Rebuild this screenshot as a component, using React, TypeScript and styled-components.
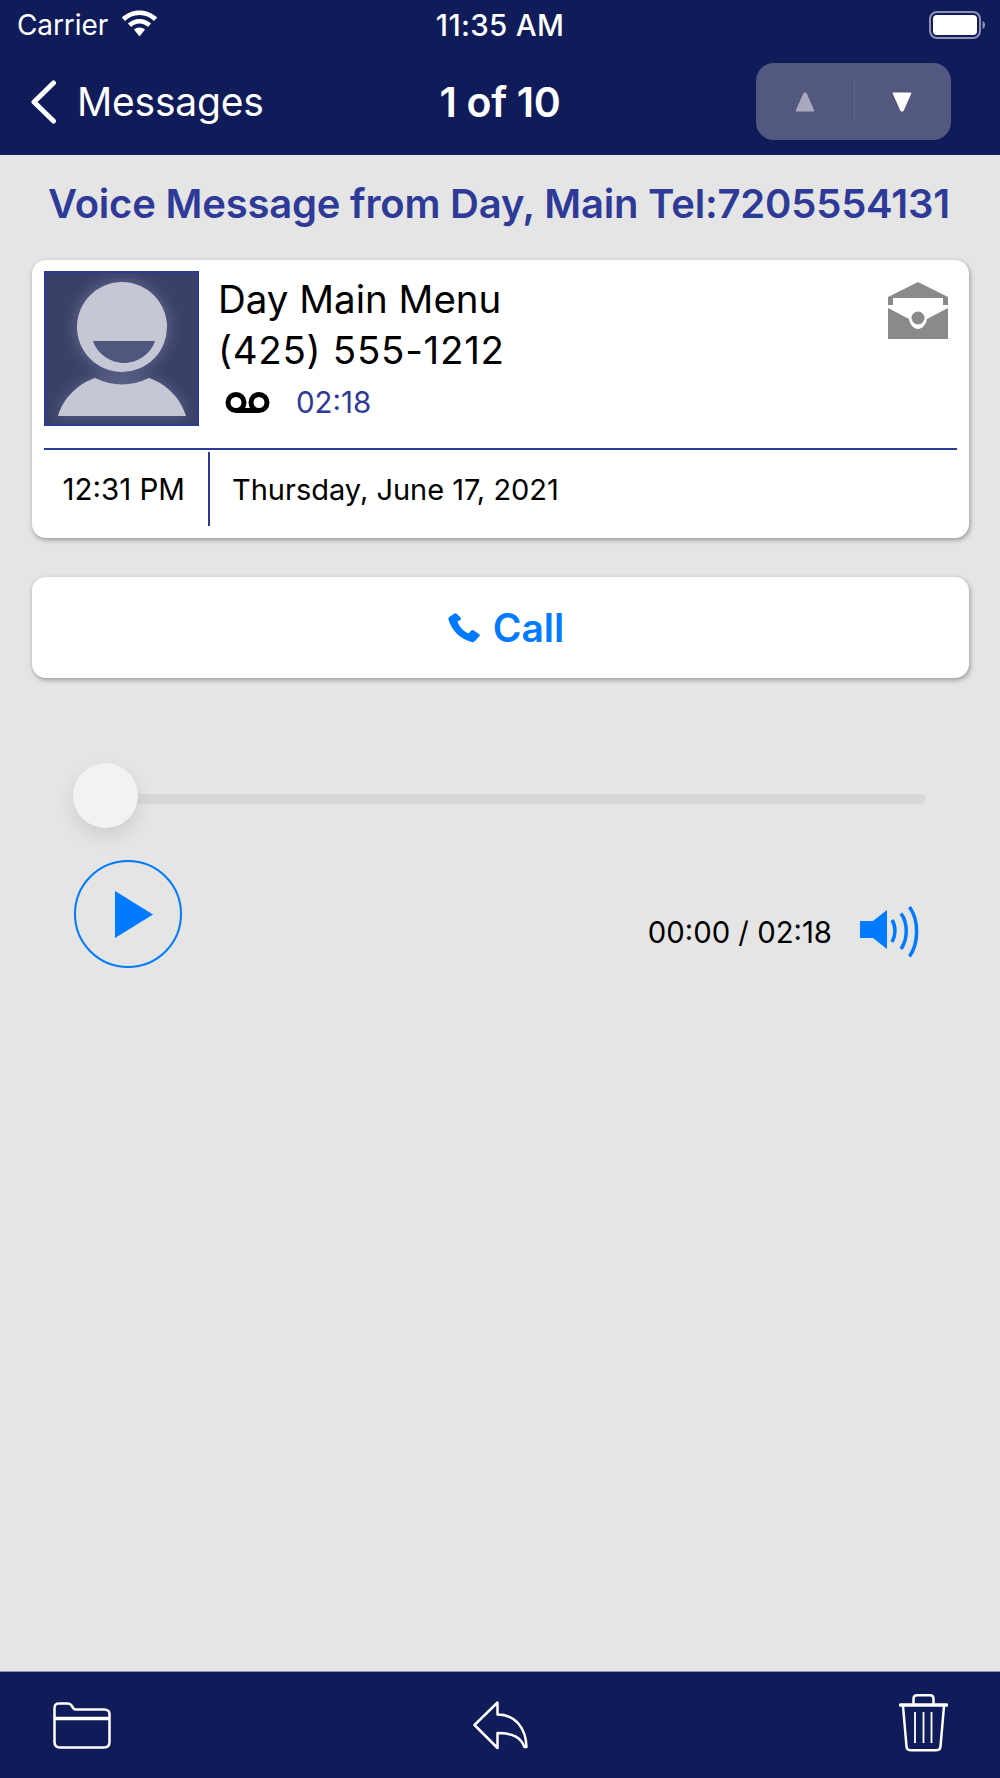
import React from 'react';
import styled, { createGlobalStyle } from 'styled-components';

const NAVY = '#101b5a';
const INDIGO = '#2e3a97';
const BLUE = '#007aff';
const FONT = 'Inter, "Liberation Sans", sans-serif';

/**
 * Icons
 */
const WifiIcon = () => (
  <svg width="37" height="27" viewBox="0 0 37 27">
    <path d="M18.5 0.5C11.6 0.5 5.4 3.2 0.8 7.6L4 10.9C7.8 7.3 12.9 5.1 18.5 5.1S29.2 7.3 33 10.9L36.2 7.6C31.6 3.2 25.4 0.5 18.5 0.5Z" fill="#fff" />
    <path d="M18.5 9C14 9 9.9 10.7 6.9 13.6L10.1 16.9C12.3 14.8 15.2 13.5 18.5 13.5S24.7 14.8 26.9 16.9L30.1 13.6C27.1 10.7 23 9 18.5 9Z" fill="#fff" />
    <path d="M18.5 17.4C16.3 17.4 14.4 18.2 13 19.6L18.5 26.5L24 19.6C22.6 18.2 20.7 17.4 18.5 17.4Z" fill="#fff" />
  </svg>
);

const BatteryIcon = () => (
  <svg width="56" height="28" viewBox="0 0 56 28">
    <rect x="1" y="1" width="50" height="26" rx="7" fill="none" stroke="#8f93b3" strokeWidth="2" />
    <rect x="4" y="4" width="44" height="20" rx="4" fill="#fff" />
    <path d="M53.5 10C55 10.6 56 12 56 14S55 17.4 53.5 18Z" fill="#8f93b3" />
  </svg>
);

const ChevronLeft = () => (
  <svg width="28" height="44" viewBox="0 0 28 44">
    <path d="M24.5 3L5 22L24.5 41" fill="none" stroke="#fff" strokeWidth="5" strokeLinecap="round" strokeLinejoin="round" />
  </svg>
);

const Triangle = ({ down, color }: { down?: boolean; color: string }) => (
  <svg width="20" height="20" viewBox="0 0 20 20">
    <path
      d={down ? 'M1 1H19L11 19H9Z' : 'M9 1H11L19 19H1Z'}
      fill={color}
      stroke={color}
      strokeWidth="1"
      strokeLinejoin="round"
    />
  </svg>
);

const AvatarIcon = () => (
  <svg width="151" height="151" viewBox="2 2 151 151">
    <defs>
      <filter id="glow" x="-20%" y="-20%" width="140%" height="140%">
        <feGaussianBlur stdDeviation="7" />
      </filter>
    </defs>
    <rect x="0" y="0" width="155" height="155" fill="#3a4168" />
    <g filter="url(#glow)" fill="#5f648a">
      <circle cx="78" cy="56" r="47" />
      <path d="M14 145C19 128 33 113 51 107H105C123 113 137 128 142 145Z" />
    </g>
    <path d="M14 145C19 128 33 113 51 107Q78 120 105 107C123 113 137 128 142 145Z" fill="#c5c7d5" />
    <circle cx="78" cy="56" r="45" fill="#c5c7d5" />
    <path d="M49 70H111C107 83 93 92 80 92C67 92 53 83 49 70Z" fill="#50577f" />
  </svg>
);

const VoicemailIcon = () => (
  <svg width="45" height="23" viewBox="0 0 45 23">
    <path
      d="M11 19.5H34M11 19.5A8 8 0 1 1 11 3.5A8 8 0 0 1 11 19.5ZM34 19.5A8 8 0 1 1 34 3.5A8 8 0 0 1 34 19.5Z"
      fill="none"
      stroke="#000"
      strokeWidth="5"
    />
  </svg>
);

const EnvelopeIcon = () => (
  <svg width="60" height="57" viewBox="0 0 60 57">
    <path d="M30 0L60 15V23H55V16H5V23H0V15Z" fill="#8a8a8a" />
    <path d="M0 26L21 37C22 43 26 47 30 47S38 43 39 37L60 26V57H0Z" fill="#8a8a8a" />
    <circle cx="30" cy="36" r="6.5" fill="#8a8a8a" />
  </svg>
);

const PhoneIcon = () => (
  <svg width="32" height="30" viewBox="0 0 32 30">
    <path
      d="M6.5 0.5L1.5 3.8C0.5 4.6 0.2 5.6 0.6 6.9C3.5 16.5 11.5 25.6 23.5 29C25 29.4 26.2 29.1 27 28.1L31.5 23C32 22.3 31.8 21.6 31 21.1L25.3 17.3C24.5 16.8 23.8 16.9 23.2 17.6L20.6 20.6C15.5 18.4 11.3 13.8 9.4 8.8L12.2 6.9C13 6.3 13.1 5.6 12.7 4.8L9 1C8.4 0.2 7.4 0 6.5 0.5Z"
      fill={BLUE}
    />
  </svg>
);

const PlayIcon = () => (
  <svg width="38" height="47" viewBox="0 0 38 47">
    <path d="M0 0L38 23.5L0 47Z" fill={BLUE} />
  </svg>
);

const SpeakerIcon = () => (
  <svg width="60" height="52" viewBox="0 0 60 52">
    <path d="M0 15H13L27 4V43L13 32H0Z" fill={BLUE} />
    <g fill="none" stroke={BLUE} strokeWidth="3.5">
      <path d="M32 14C36 20 36 29 32 36" />
      <path d="M41 7.5C48 17 48 33 41 43" />
      <path d="M49.5 1C59 14 59 37 49.5 50.5" />
    </g>
  </svg>
);

const FolderIcon = () => (
  <svg width="58" height="47" viewBox="0 0 58 47" fill="none" stroke="#fff" strokeWidth="2.5">
    <path d="M1.5 6C1.5 3 3 1.5 6 1.5H15C17 1.5 18 2.5 19 4C20 6.5 21 7.5 23 7.5H51C54.5 7.5 56.5 9.5 56.5 12V40C56.5 44 54.5 45.5 51 45.5H7C3.5 45.5 1.5 44 1.5 40Z" />
    <path d="M1.5 16.5H56.5" strokeWidth="3.5" />
  </svg>
);

const ReplyIcon = () => (
  <svg width="56" height="49" viewBox="0 0 56 49" fill="none" stroke="#fff" strokeWidth="2.5" strokeLinejoin="round">
    <path d="M24.5 1.5V13.5C43 13.5 53 28 53.5 46H51.5C48 37 41 32 24.5 32V47L1.5 24Z" />
  </svg>
);

const TrashIcon = () => (
  <svg width="49" height="62" viewBox="0 0 49 62" fill="none" stroke="#fff" strokeWidth="2.5">
    <path d="M1.5 11H47.5" strokeWidth="3.5" strokeLinecap="round" />
    <path d="M14.5 11V5C14.5 2.5 16 1.3 18 1.3H31C33 1.3 34.5 2.5 34.5 5V11" />
    <path d="M4 12L7.5 52.5C7.7 55 9.5 56.2 11.5 56.2H37.5C39.5 56.2 41.3 55 41.5 52.5L45 12" />
    <path d="M16 18V49M24.5 18V49M32.5 18V49" strokeWidth="1.8" />
  </svg>
);

/**
 * Message Detail Screen
 */
const App = () => {
  return (
    <Page>
      <GlobalStyle />
      <Header>
        <StatusBar>
          <Carrier>
            Carrier
            <WifiIcon />
          </Carrier>
          <Clock>11:35 AM</Clock>
          <Battery>
            <BatteryIcon />
          </Battery>
        </StatusBar>
        <NavBar>
          <BackLink>
            <ChevronLeft />
            <span>Messages</span>
          </BackLink>
          <NavTitle>1 of 10</NavTitle>
          <Stepper>
            <StepButton>
              <Triangle color="#a8abbf" />
            </StepButton>
            <StepButton divided>
              <Triangle down color="#fff" />
            </StepButton>
          </Stepper>
        </NavBar>
      </Header>

      <Main>
        <Heading>Voice Message from Day, Main Tel:7205554131</Heading>

        <Card>
          <CardTop>
            <Avatar>
              <AvatarIcon />
            </Avatar>
            <Caller>
              <CallerLine>Day Main Menu</CallerLine>
              <CallerLine wide>(425) 555-1212</CallerLine>
              <DurationRow>
                <VoicemailIcon />
                <Duration>02:18</Duration>
              </DurationRow>
            </Caller>
            <EnvelopeSlot>
              <EnvelopeIcon />
            </EnvelopeSlot>
          </CardTop>
          <CardBottom>
            <TimeCell>12:31 PM</TimeCell>
            <DateCell>Thursday, June 17, 2021</DateCell>
          </CardBottom>
        </Card>

        <CallButton>
          <PhoneIcon />
          Call
        </CallButton>

        <Player>
          <Track>
            <Thumb />
          </Track>
          <Controls>
            <PlayButton>
              <PlayIcon />
            </PlayButton>
            <Volume>
              <Elapsed>00:00 / 02:18</Elapsed>
              <SpeakerIcon />
            </Volume>
          </Controls>
        </Player>
      </Main>

      <Toolbar>
        <FolderIcon />
        <ReplyIcon />
        <TrashSlot>
          <TrashIcon />
        </TrashSlot>
      </Toolbar>
    </Page>
  );
};

/**
 * Styled Components
 */
const GlobalStyle = createGlobalStyle`
  html, body {
    margin: 0;
    padding: 0;
    background: #e5e5e5;
  }
`;

const Page = styled.div`
  display: flex;
  flex-direction: column;
  width: 1000px;
  height: 1778px;
  background: #e5e5e5;
  font-family: ${FONT};
  overflow: hidden;
`;

const Header = styled.header`
  display: flex;
  flex-direction: column;
  height: 155px;
  background: ${NAVY};
  color: #fff;
`;

const StatusBar = styled.div`
  display: grid;
  grid-template-columns: 1fr auto 1fr;
  align-items: center;
  height: 48px;
  padding: 2px 17px 0;
  box-sizing: border-box;
`;

const Carrier = styled.div`
  display: flex;
  align-items: center;
  gap: 13px;
  font-size: 28px;
  letter-spacing: -0.1px;
  svg {
    margin-top: -4px;
  }
`;

const Clock = styled.div`
  font-weight: 500;
  font-size: 29.5px;
  letter-spacing: 0.3px;
`;

const Battery = styled.div`
  display: flex;
  justify-content: flex-end;
  margin-right: -2px;
`;

const NavBar = styled.div`
  display: grid;
  grid-template-columns: 1fr auto 1fr;
  align-items: center;
  padding: 15px 29px;
  flex: 1;
`;

const BackLink = styled.div`
  display: flex;
  align-items: center;
  gap: 20px;
  font-size: 39px;
  letter-spacing: -0.2px;
`;

const NavTitle = styled.div`
  font-size: 41px;
  font-weight: 600;
  letter-spacing: -0.3px;
`;

const Stepper = styled.div`
  display: flex;
  justify-self: end;
  width: 195px;
  height: 77px;
  margin-right: 20px;
  border-radius: 18px;
  background: #535880;
`;

const StepButton = styled.div<{ divided?: boolean }>`
  flex: 1;
  display: flex;
  align-items: center;
  justify-content: center;
  position: relative;
  ${(p) =>
    p.divided &&
    `
    &::before {
      content: '';
      position: absolute;
      left: 0;
      top: 17px;
      bottom: 17px;
      width: 1px;
      background: #60658b;
    }
  `}
`;

const Main = styled.main`
  flex: 1;
  display: flex;
  flex-direction: column;
  padding: 25px 31px 0 32px;
`;

const Heading = styled.h1`
  margin: 0;
  padding-right: 3px;
  color: ${INDIGO};
  font-size: 40px;
  font-weight: 600;
  line-height: 48px;
  text-align: center;
  white-space: nowrap;
  letter-spacing: -0.2px;
`;

const Card = styled.section`
  display: flex;
  flex-direction: column;
  height: 278px;
  margin-top: 32px;
  padding: 11px 12px 0;
  box-sizing: border-box;
  background: #fff;
  border-radius: 14px;
  box-shadow: 1px 2px 5px rgba(0, 0, 0, 0.35);
`;

const CardTop = styled.div`
  display: flex;
  height: 177px;
  border-bottom: 2px solid ${INDIGO};
  box-sizing: content-box;
`;

const Avatar = styled.div`
  width: 151px;
  height: 151px;
  border: 2px solid ${INDIGO};
  svg {
    display: block;
  }
`;

const Caller = styled.div`
  flex: 1;
  display: flex;
  flex-direction: column;
  padding: 3px 0 0 19px;
`;

const CallerLine = styled.div<{ wide?: boolean }>`
  font-size: 38.5px;
  line-height: 51px;
  color: #000;
  letter-spacing: ${(p) => (p.wide ? '0.7px' : '0')};
`;

const DurationRow = styled.div`
  display: flex;
  align-items: center;
  gap: 26px;
  margin-top: 8px;
  padding-left: 7px;
`;

const Duration = styled.span`
  color: ${INDIGO};
  font-size: 29.5px;
`;

const EnvelopeSlot = styled.div`
  padding: 11px 9px 0 0;
`;

const CardBottom = styled.div`
  display: flex;
  height: 74px;
  margin-top: 2px;
  font-size: 29.5px;
  color: #000;
`;

const TimeCell = styled.div`
  display: flex;
  align-items: center;
  justify-content: flex-end;
  width: 166px;
  padding-right: 23px;
  box-sizing: border-box;
  border-right: 2px solid ${INDIGO};
`;

const DateCell = styled.div`
  display: flex;
  align-items: center;
  padding-left: 22px;
  font-size: 29px;
`;

const CallButton = styled.button`
  display: flex;
  align-items: center;
  justify-content: center;
  gap: 13px;
  height: 101px;
  margin-top: 39px;
  padding: 0 0 0 11px;
  border: 0;
  border-radius: 14px;
  background: #fff;
  box-shadow: 1px 2px 5px rgba(0, 0, 0, 0.35);
  color: ${BLUE};
  font-family: ${FONT};
  font-size: 39px;
  font-weight: 600;
`;

const Player = styled.div`
  display: flex;
  flex-direction: column;
  padding: 116px 43px 0 42px;
`;

const Track = styled.div`
  position: relative;
  height: 10px;
  border-radius: 5px;
  background: #d8d8d8;
`;

const Thumb = styled.div`
  position: absolute;
  left: -1px;
  top: -31px;
  width: 65px;
  height: 65px;
  border-radius: 50%;
  background: #f2f2f2;
  box-shadow: 0 8px 18px rgba(0, 0, 0, 0.1);
`;

const Controls = styled.div`
  display: flex;
  justify-content: space-between;
  align-items: flex-start;
  margin-top: 56px;
`;

const PlayButton = styled.div`
  display: flex;
  align-items: center;
  justify-content: center;
  width: 108px;
  height: 108px;
  padding-left: 11px;
  box-sizing: border-box;
  border: 2.5px solid ${BLUE};
  border-radius: 50%;
`;

const Volume = styled.div`
  display: flex;
  align-items: center;
  gap: 28px;
  margin-top: 46px;
  margin-right: 6px;
`;

const Elapsed = styled.span`
  color: #000;
  font-size: 29.3px;
`;

const Toolbar = styled.footer`
  display: grid;
  grid-template-columns: 1fr auto 1fr;
  align-items: center;
  height: 107px;
  padding: 0 52px 0 53px;
  box-sizing: border-box;
  background: ${NAVY};
  border-top: 1px solid #8f93b3;
`;

const TrashSlot = styled.div`
  justify-self: end;
  display: flex;
`;

export default App;
